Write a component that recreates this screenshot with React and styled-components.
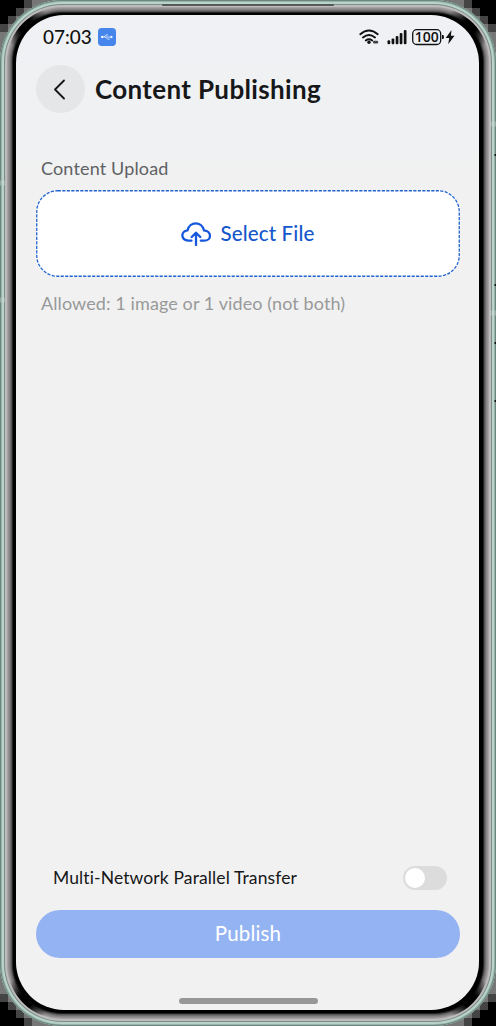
import React from "react";
import styled, { createGlobalStyle } from "styled-components";

const GlobalStyle = createGlobalStyle`
  * { box-sizing: border-box; }
  html, body { margin: 0; background: #000; overflow: hidden; }
  body { font-family: "Lato", "Open Sans", sans-serif; font-variant-ligatures: none; }
  button { font: inherit; border: 0; margin: 0; padding: 0; background: none; }
`;

const Stage = styled.div`
  position: relative;
  width: 496px;
  height: 1026px;
  background: #000;
  overflow: hidden;
`;

const CornerSteps = styled.svg`
  position: absolute;
  width: 64px;
  height: 64px;
  ${(p) => (p.$bottom ? "bottom: 0;" : "top: 0;")}
  ${(p) => (p.$right ? "right: 0;" : "left: 0;")}
  transform: scale(${(p) => (p.$right ? -1 : 1)}, ${(p) => (p.$bottom ? -1 : 1)});
`;

const Bezel = styled.div`
  position: relative;
  width: 496px;
  height: 1026px;
  padding: 15px 17px 16px 16px;
  border-radius: 62px;
  background: #000;
  box-shadow: inset 0 0 0 1px #6d857e, inset 0 0 0 2px #94b3aa,
    inset 0 0 0 4px #b9d3cb, inset 0 0 0 5px #7d8c87, inset 0 0 0 7px #bcbcbc,
    inset 0 0 0 8px #a5a0a3, inset 0 0 0 9px #959193, inset 0 0 0 10px #858384,
    inset 0 0 0 11px #6e6e6e, inset 0 0 0 12px #545454, inset 0 0 0 13px #222;

  &::before {
    content: "";
    position: absolute;
    inset: 7px;
    border-radius: 55px;
    background:
      radial-gradient(circle at 17px 17px, #000 7px, transparent 25px),
      radial-gradient(circle at calc(100% - 17px) 17px, #000 7px, transparent 25px),
      radial-gradient(circle at 17px calc(100% - 17px), #000 7px, transparent 25px),
      radial-gradient(circle at calc(100% - 17px) calc(100% - 17px), #000 7px, transparent 25px);
  }
`;

const FrameMarks = styled.svg`
  position: absolute;
  inset: 0;
  pointer-events: none;
`;

const Screen = styled.main`
  position: relative;
  display: flex;
  flex-direction: column;
  height: 995px;
  padding: 0 19px 0 20px;
  border-radius: 48px;
  background: linear-gradient(#eff1f4, #f1f1f1 20%);
  overflow: hidden;
`;

const Label = styled.span`
  white-space: nowrap;
  line-height: 1;
  font-size: ${(p) => p.$size}px;
  font-weight: ${(p) => p.$weight || 400};
  letter-spacing: ${(p) => p.$track || 0}px;
  color: ${(p) => p.$color || "#161719"};
  padding-bottom: ${(p) => p.$lift ?? 2}px;
`;

const StatusBar = styled.header`
  display: flex;
  align-items: center;
  height: 44px;
  padding: 0 4px 0 7px;
`;

const UsbBadge = styled.svg`
  width: 18px;
  height: 18px;
  margin-left: 6px;
`;

const StatusIcons = styled.svg`
  width: 98px;
  height: 20px;
  margin-left: auto;
`;

const TitleBar = styled.div`
  display: flex;
  align-items: center;
  gap: 10px;
  height: 48px;
  margin-top: 6px;
`;

const Title = styled.h1`
  margin: 0;
  padding-bottom: 1px;
  white-space: nowrap;
  font-size: 26px;
  font-weight: 700;
  line-height: 1;
  letter-spacing: 0.34px;
  color: #161719;
`;

const BackButton = styled.button`
  display: grid;
  place-items: center;
  width: 49px;
  height: 48px;
  border-radius: 50%;
  background: #e5e6e8;
`;

const Upload = styled.section`
  display: flex;
  flex-direction: column;
  padding-top: 46px;
`;

const Caption = styled.div`
  display: flex;
  align-items: center;
  height: 20px;
  padding-left: 5px;
`;

const DropZone = styled.button`
  position: relative;
  display: flex;
  align-items: center;
  justify-content: center;
  gap: 9px;
  width: 424px;
  height: 87px;
  margin: 11px 0 17px;
  border-radius: 21px;
  background: #fff;
`;

const DashOutline = styled.svg`
  position: absolute;
  inset: 0;
`;

const Footer = styled.footer`
  margin-top: auto;
  display: flex;
  flex-direction: column;
`;

const SettingRow = styled.div`
  display: flex;
  align-items: center;
  justify-content: space-between;
  height: 24px;
  padding: 0 13px 0 17px;
`;

const Switch = styled.button`
  display: flex;
  align-items: center;
  width: 44px;
  height: 24px;
  padding: 0 2px;
  border-radius: 12px;
  background: #dcdcdc;
`;

const Knob = styled.span`
  width: 20px;
  height: 20px;
  border-radius: 50%;
  background: #fff;
`;

const PublishButton = styled.button`
  display: flex;
  align-items: center;
  justify-content: center;
  height: 48px;
  margin-top: 20px;
  border-radius: 24px;
  background: #94b3f3;
`;

const HomeIndicator = styled.div`
  align-self: center;
  width: 139px;
  height: 6px;
  margin: 40px 0 6px;
  border-radius: 3px;
  background: #979797;
`;

const corners = [
  { r: false, b: false },
  { r: true, b: false },
  { r: false, b: true },
  { r: true, b: true },
];

function Steps({ r, b }) {
  return (
    <CornerSteps $right={r} $bottom={b} viewBox="0 0 64 64" shapeRendering="crispEdges">
      <path fill="#444" d="M0 24h8v-8h8v-8h8v-8h40v64h-64z" />
      <path fill="#777" d="M0 32h8v-8h8v-8h8v-8h8v-8h32v64h-64z" />
    </CornerSteps>
  );
}

export default function App() {
  return (
    <Stage>
      <GlobalStyle />
      {corners.map((c, i) => (
        <Steps key={i} {...c} />
      ))}
      <Bezel>
        <FrameMarks width="496" height="1026" viewBox="0 0 496 1026">
          <rect x="162" y="4" width="172" height="2" rx="1" fill="#555958" />
          <path d="M0 183h5M0 300h5M490 124h6M490 313h6" stroke="#c9d8d3" strokeWidth="5" opacity=".4" />
          <path d="M494.500 155h1.500M494.500 285h1.500M494.500 343h1.500M494.500 401h1.500" stroke="#111" strokeWidth="2" />
        </FrameMarks>
        <Screen>
          <StatusBar>
            <Label $size={19} $weight={500} $color="#111">07:03</Label>
            <UsbBadge viewBox="0 0 17 17">
              <rect width="17" height="17" rx="3.5" fill="#4585ec" />
              <path d="M3 8.5h10M5.500 8.500l2-2h2M7 8.500l2 2h2" fill="none" stroke="#e4eefc" strokeWidth="0.8" />
              <circle cx="4" cy="8.5" r="1.1" fill="#fff" />
              <path d="M12 7l2.200 1.500L12 10z" fill="#fff" />
            </UsbBadge>
            <StatusIcons viewBox="358 27 98 20">
              <g fill="none" stroke="#111" strokeWidth="1.9" strokeLinecap="round">
                <path d="M360.300 34.200q8.700-7.200 17.400 0M363 37.500q6-4.800 12 0M365.800 40.400q3.200-2.300 6.400 0" />
              </g>
              <circle cx="369" cy="42.300" r="1.700" fill="#111" />
              <rect x="373" y="40.800" width="5.200" height="2.600" rx="1.200" fill="#444" />
              <g fill="#111">
                <rect x="387.500" y="40.300" width="2.700" height="3.900" rx="1" />
                <rect x="391.600" y="38.500" width="2.700" height="5.700" rx="1" />
                <rect x="395.700" y="36" width="2.700" height="8.200" rx="1" />
                <rect x="399.700" y="33" width="2.700" height="11.200" rx="1" />
                <rect x="403.800" y="30" width="2.700" height="14.200" rx="1" />
              </g>
              <rect x="412.700" y="29.700" width="28" height="14.800" rx="4" fill="none" stroke="#111" strokeWidth="1.3" />
              <text x="426.700" y="42.100" textAnchor="middle" textLength="24" lengthAdjust="spacingAndGlyphs" fontFamily="Open Sans" fontWeight="600" fontSize="14.500" fill="#111">100</text>
              <path d="M442 35h1q1 0 1 2t-1 2h-1z" fill="#111" />
              <path d="M451.500 30l-5.800 8h3.500l-1 6.300 6.300-8.600h-3.600z" fill="#111" />
            </StatusIcons>
          </StatusBar>
          <TitleBar>
            <BackButton aria-label="Back">
              <svg width="24" height="24" viewBox="0 0 24 24" fill="none" stroke="#151515" strokeWidth="1.8" strokeLinecap="round" strokeLinejoin="round">
                <path d="M15 3.500L6 12.500l9 9" />
              </svg>
            </BackButton>
            <Title>Content Publishing</Title>
          </TitleBar>
          <Upload>
            <Caption>
              <Label $size={18} $track={0.15} $color="#606163">Content Upload</Label>
            </Caption>
            <DropZone>
              <DashOutline width="424" height="87">
                <rect x="0.75" y="0.75" width="422.5" height="85.5" rx="21" fill="none" stroke="#2263cf" strokeWidth="1.3" strokeDasharray="3.2 1.3" />
              </DashOutline>
              <svg width="30" height="24" viewBox="0 0 30 24" fill="none" stroke="#1558dc" strokeWidth="2.3" strokeLinecap="round" strokeLinejoin="round">
                <path d="M10.500 18.700H7.500C-.5 18-.5 9.300 6.500 8.400C8.500-1 21-1 23 8.400C31 9.300 31 18.700 23 18.700H19.800M15 23V10.800M10.700 15L15 10.700L19.300 15" />
              </svg>
              <Label $size={20.5} $weight={500} $track={0.15} $lift={0} $color="#1558cc">Select File</Label>
            </DropZone>
            <Caption>
              <Label $size={18} $track={0.1} $color="#98999a">Allowed: 1 image or 1 video (not both)</Label>
            </Caption>
          </Upload>
          <Footer>
            <SettingRow>
              <Label $size={17.5} $track={0.12} $lift={0}>Multi-Network Parallel Transfer</Label>
              <Switch role="switch" aria-checked="false"><Knob /></Switch>
            </SettingRow>
            <PublishButton>
              <Label $size={20.5} $track={0.15} $color="#fff">Publish</Label>
            </PublishButton>
            <HomeIndicator />
          </Footer>
        </Screen>
      </Bezel>
    </Stage>
  );
}
